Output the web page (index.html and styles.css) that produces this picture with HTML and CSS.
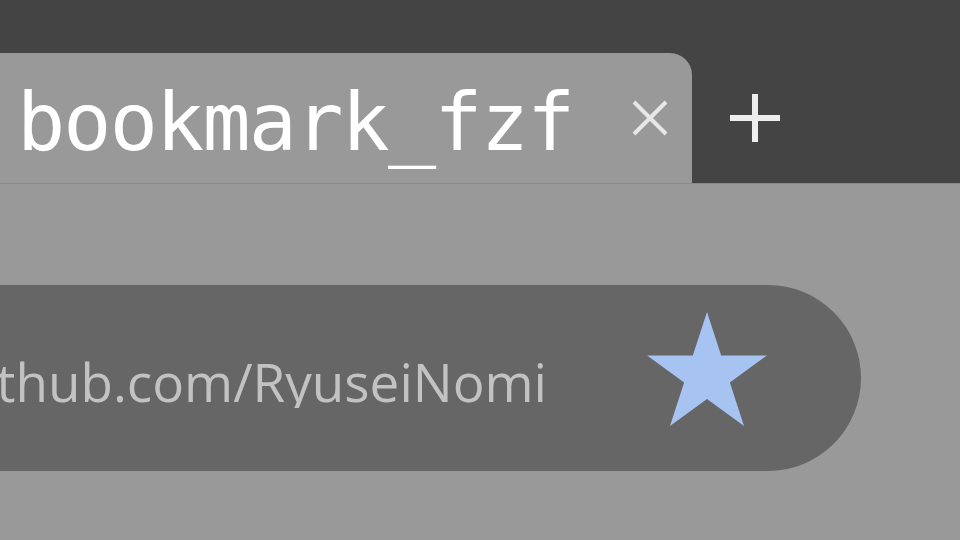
FILE: index.html
```html
<!DOCTYPE html>
<html lang="en">
<head>
<meta charset="utf-8">
<title>bookmark_fzf</title>
<link rel="stylesheet" href="styles.css">
</head>
<body>
<header class="tabbar">
  <div class="tab">
    <span class="tab-title">bookmark_fzf</span>
    <svg class="tab-close" width="36" height="36" viewBox="0 0 36 36" aria-label="close">
      <path d="M2 2 L34 34 M34 2 L2 34" stroke="#e6e6e6" stroke-width="4" stroke-linecap="butt" fill="none"/>
    </svg>
  </div>
  <div class="new-tab">
    <svg width="50" height="48" viewBox="0 0 50 48" aria-label="new tab">
      <path d="M0 24 H50 M25 0 V48" stroke="#eeeeee" stroke-width="6" fill="none"/>
    </svg>
  </div>
</header>
<main class="content">
  <div class="urlbar">
    <div class="url"><span class="url-text">github.com/RyuseiNomi</span></div>
    <svg class="star" width="122" height="116" viewBox="0 0 122 116" aria-label="bookmark">
      <polygon points="61,0 75.2,43.5 120.9,43.5 83.9,70.4 98,114 61,87.1 24,114 38.1,70.4 1.1,43.5 46.8,43.5" fill="#a6c3f2"/>
    </svg>
  </div>
</main>
</body>
</html>
```

FILE: styles.css
```css
html, body {
  margin: 0;
  padding: 0;
}
body {
  width: 960px;
  height: 540px;
  overflow: hidden;
  background: #999999;
}
.tabbar {
  box-sizing: border-box;
  height: 184px;
  background: #444444;
  border-bottom: 1px solid #8a8a8a;
  display: flex;
  align-items: flex-end;
}
.tab {
  box-sizing: border-box;
  width: 692px;
  height: 130px;
  background: #999999;
  border-top-right-radius: 22px;
  display: flex;
  align-items: center;
  padding-left: 17px;
  padding-right: 24px;
}
.tab-title {
  font-family: "DejaVu Sans Mono", monospace;
  font-size: 80px;
  line-height: 1;
  letter-spacing: -1.8px;
  color: #ffffff;
  padding-top: 9px;
  white-space: nowrap;
}
.tab-close {
  margin-left: auto;
  display: block;
}
.new-tab {
  height: 130px;
  display: flex;
  align-items: center;
  margin-left: 38px;
}
.new-tab svg {
  display: block;
}
.content {
  padding-top: 101px;
}
.urlbar {
  width: 861px;
  height: 186px;
  background: #666666;
  border-radius: 0 93px 93px 0;
  display: flex;
  align-items: center;
}
.url {
  flex: 0 0 547px;
  overflow: hidden;
  display: flex;
  justify-content: flex-end;
  padding-top: 6px;
}
.url-text {
  font-family: "Open Sans", "Noto Sans", sans-serif;
  font-size: 53px;
  line-height: 1;
  color: #c2c2c2;
  white-space: nowrap;
}
.star {
  display: block;
  margin-left: 99px;
  margin-bottom: 16px;
}
```
